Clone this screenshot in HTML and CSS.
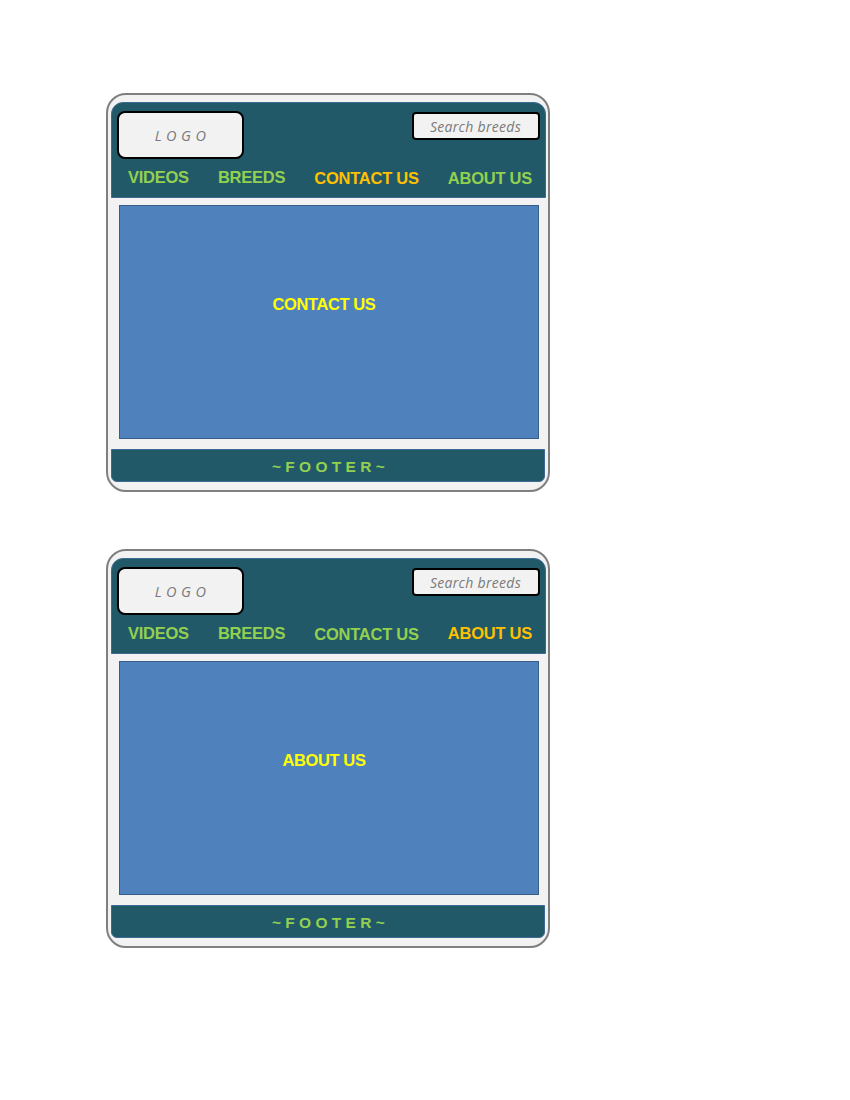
FILE: index.html
```html
<!DOCTYPE html>
<html>
<head>
<meta charset="utf-8">
<link rel="stylesheet" href="styles.css">
</head>
<body>
<div class="page">
  <div class="frame">
    <div class="header">
      <div class="top-row">
        <div class="logo">LOGO</div>
        <div class="search">Search breeds</div>
      </div>
      <nav class="nav">
        <span class="nav-item">VIDEOS</span>
        <span class="nav-item">BREEDS</span>
        <span class="nav-item active low">CONTACT US</span>
        <span class="nav-item low">ABOUT US</span>
      </nav>
    </div>
    <div class="content"><span class="content-title">CONTACT US</span></div>
    <div class="footer">~FOOTER~</div>
  </div>

  <div class="frame">
    <div class="header">
      <div class="top-row">
        <div class="logo">LOGO</div>
        <div class="search">Search breeds</div>
      </div>
      <nav class="nav">
        <span class="nav-item">VIDEOS</span>
        <span class="nav-item">BREEDS</span>
        <span class="nav-item low">CONTACT US</span>
        <span class="nav-item active">ABOUT US</span>
      </nav>
    </div>
    <div class="content"><span class="content-title">ABOUT US</span></div>
    <div class="footer">~FOOTER~</div>
  </div>
</div>
</body>
</html>
```

FILE: styles.css
```css
html, body {
  margin: 0;
  padding: 0;
  background: #ffffff;
}

.page {
  display: flex;
  flex-direction: column;
  gap: 57px;
  padding: 93px 0 0 106px;
}

.frame {
  width: 444px;
  height: 399px;
  box-sizing: border-box;
  border: 2px solid #7f7f7f;
  border-radius: 20px;
  background: #f2f2f2;
  padding: 7px 2px 8px 3px;
  display: flex;
  flex-direction: column;
}

.header {
  height: 96px;
  box-sizing: border-box;
  background: #215968;
  border: 1px solid #3d6a93;
  border-radius: 12px 12px 0 0;
  display: flex;
  flex-direction: column;
  padding: 8px 5px 0 5px;
}

.top-row {
  display: flex;
  justify-content: space-between;
  align-items: flex-start;
}

.logo {
  width: 127px;
  height: 48px;
  box-sizing: border-box;
  border: 2px solid #000000;
  border-radius: 8px;
  background: #f2f2f2;
  display: flex;
  align-items: center;
  justify-content: center;
  font-family: "Open Sans", sans-serif;
  font-style: italic;
  font-size: 14.5px;
  letter-spacing: 4.5px;
  color: #7a7a7a;
  padding-left: 4px;
}

.search {
  width: 128px;
  height: 28px;
  margin-top: 1px;
  box-sizing: border-box;
  border: 2px solid #000000;
  border-radius: 4px;
  background: #f2f2f2;
  display: flex;
  align-items: center;
  justify-content: flex-end;
  padding-right: 17px;
  font-family: "Open Sans", sans-serif;
  font-style: italic;
  font-size: 14px;
  letter-spacing: 0.3px;
  color: #7a7a7a;
}

.nav {
  display: flex;
  justify-content: space-between;
  padding: 0 8px 0 11px;
  margin-top: 9px;
}

.nav-item {
  font-family: "Liberation Sans", Arial, sans-serif;
  font-weight: bold;
  font-size: 16.5px;
  letter-spacing: -0.25px;
  line-height: 18px;
  color: #92d050;
}

.nav-item.low {
  position: relative;
  top: 1px;
}

.nav-item.active {
  color: #ffc000;
}

.content {
  height: 234px;
  box-sizing: border-box;
  margin: 7px 7px 0 8px;
  background: #4f81bd;
  border: 1.5px solid #385d8a;
  display: flex;
  justify-content: center;
  padding: 89px 10px 0 0;
}

.content-title {
  font-family: "Liberation Sans", Arial, sans-serif;
  font-weight: bold;
  font-size: 16.5px;
  letter-spacing: -0.4px;
  line-height: 18px;
  color: #ffff00;
}

.footer {
  height: 33px;
  margin-top: 10px;
  margin-right: 1px;
  box-sizing: border-box;
  background: #215968;
  border: 1px solid #3d6a93;
  border-radius: 0 0 6px 6px;
  display: flex;
  align-items: center;
  justify-content: center;
  font-family: "Liberation Sans", Arial, sans-serif;
  font-weight: bold;
  font-size: 15.5px;
  letter-spacing: 4.3px;
  color: #92d050;
  padding: 2px 0 0 5px;
}
```
